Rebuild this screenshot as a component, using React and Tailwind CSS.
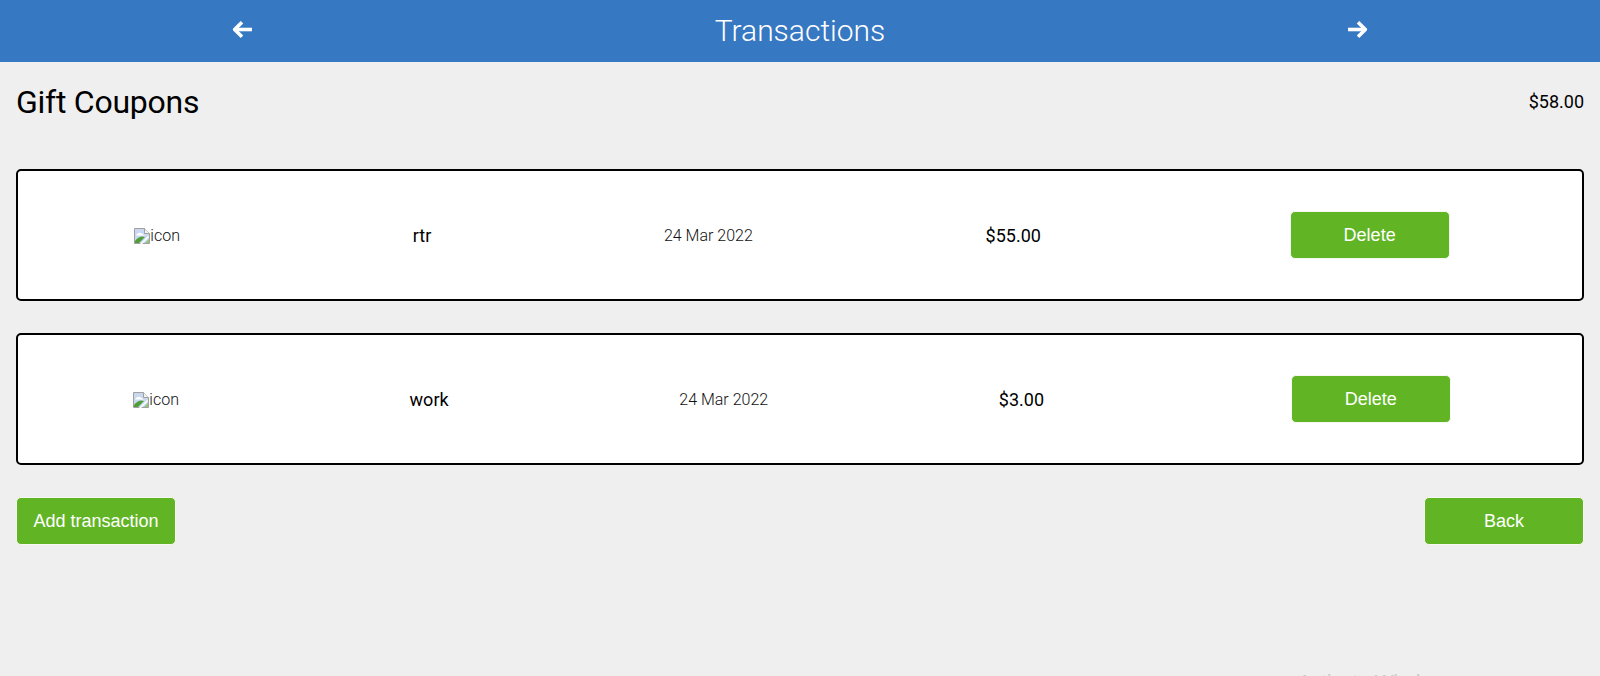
const roboto = "font-['Roboto',sans-serif]";
const arial = "font-['Liberation_Sans',Arial,sans-serif]";

function Arrow({ flip }) {
  return (
    <svg width="21" height="19" viewBox="0 0 20 18" fill="none" stroke="#fff" strokeWidth="3.4" strokeLinejoin="round" className={flip ? "rotate-180" : ""}>
      <path d="M19 9H3" />
      <path d="M9.5 2 2.5 9l7 7" />
    </svg>
  );
}

function BrokenImage() {
  return (
    <svg width="16" height="16" viewBox="0 0 16 16" className="shrink-0">
      <path d="M0.5 15.5V0.5H10.5L15.5 5.5V15.5Z" fill="#c9d8f0" stroke="#a0a0a0" />
      <path d="M10.5 0.5V5.5H15.5" fill="#f4f4f4" stroke="#a0a0a0" />
      <path d="M2 7.5c1-2 3-3 4.500-2.500 1.500 0 2.500 1.500 4.500 2.500Z" fill="#fff" />
      <path d="M1 15v-2c2-2.500 4-4 7-4.500 1 0 2 .2 3 .5l-6 6Z" fill="#4f9e3a" />
      <path d="M6 16l8-8 1 1-7 7Z" fill="#fff" />
      <path d="M11 15l4-4v4Z" fill="#8fc47a" />
    </svg>
  );
}

function GreenButton({ children, className = "" }) {
  return (
    <button className={`h-[48px] w-[160px] rounded-[5px] border border-[#f6f9f2] bg-[#61b525] text-center text-[18px] text-white ${arial} ${className}`}>
      {children}
    </button>
  );
}

function Row({ name, date, amount, className = "" }) {
  return (
    <div className={`flex h-[132px] items-center justify-around rounded-[5px] border-2 border-black bg-white ${className}`}>
      <span className={`flex items-center pt-[2px] text-[16px] leading-[16px] font-light text-[#111] ${roboto}`}>
        <BrokenImage />
        icon
      </span>
      <span className={`text-[18px] text-black ${roboto}`}>{name}</span>
      <span className={`pt-px text-[16px] font-light text-[#111] ${roboto}`}>{date}</span>
      <span className={`text-[18px] text-black ${roboto}`}>{amount}</span>
      <GreenButton className="mx-4">Delete</GreenButton>
    </div>
  );
}

export default function App() {
  return (
    <div className={`relative h-[676px] overflow-hidden bg-[#efefef] ${roboto}`}>
      <header className="grid h-[62px] grid-cols-[1fr_auto_1fr] items-center bg-[#3778c2]">
        <div className="flex justify-center pb-[3px]">
          <div className="mr-[230px]"><Arrow /></div>
        </div>
        <h1 className="pb-[2px] text-[30px] font-light text-white">Transactions</h1>
        <div className="flex justify-center pb-[3px]">
          <div className="ml-[230px]"><Arrow flip /></div>
        </div>
      </header>

      <main className="px-4">
        <div className="flex items-start justify-between pt-[21px]">
          <h2 className="text-[32px] leading-[38px] tracking-[-0.25px] text-black">Gift Coupons</h2>
          <span className="pt-[5px] text-[18px] text-black">$58.00</span>
        </div>
        <Row name="rtr" date="24 Mar 2022" amount="$55.00" className="mt-[48px]" />
        <Row name="work" date="24 Mar 2022" amount="$3.00" className="mt-[32px]" />
        <div className="mt-[32px] flex justify-between">
          <GreenButton>Add transaction</GreenButton>
          <GreenButton>Back</GreenButton>
        </div>
      </main>

      <div className={`absolute left-[1298px] top-[670px] text-[20px] leading-[24px] text-[#c8c8c8] ${arial}`}>Activate Windows</div>
    </div>
  );
}
